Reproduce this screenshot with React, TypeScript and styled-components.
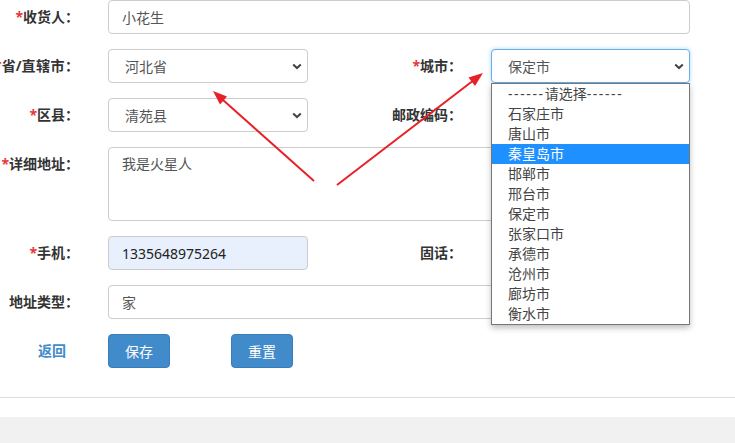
import { createGlobalStyle } from 'styled-components'
import styled from 'styled-components'

const cities = [
  '石家庄市',
  '唐山市',
  '秦皇岛市',
  '邯郸市',
  '邢台市',
  '保定市',
  '张家口市',
  '承德市',
  '沧州市',
  '廊坊市',
  '衡水市',
]

export default function App() {
  return (
    <Page>
      <GlobalStyle />
      <FormArea>
        <FormGrid>
          <Label><Star>*</Star>收货人：</Label>
          <Field $span={3}>
            <TextInput defaultValue="小花生" />
          </Field>

          <Label><Star>*</Star>省/<Wide>直辖市</Wide>：</Label>
          <Field>
            <SelectBox>
              <Select defaultValue="河北省">
                <option>河北省</option>
              </Select>
              <Chevron />
            </SelectBox>
          </Field>
          <Label><Star>*</Star>城市：</Label>
          <Field>
            <SelectBox>
              <Select defaultValue="保定市" $focused>
                <option>保定市</option>
              </Select>
              <Chevron />
              <OptionList>
                <OptionItem>
                  <Dashes>------</Dashes>请选择<Dashes>------</Dashes>
                </OptionItem>
                {cities.map((city, i) => (
                  <OptionItem key={city} $active={i === 2}>{city}</OptionItem>
                ))}
              </OptionList>
            </SelectBox>
          </Field>

          <Label><Star>*</Star>区县：</Label>
          <Field>
            <SelectBox>
              <Select defaultValue="清苑县">
                <option>清苑县</option>
              </Select>
              <Chevron />
            </SelectBox>
          </Field>
          <Label>邮政编码：</Label>
          <Field>
            <TextInput />
          </Field>

          <Label><Star>*</Star>详细地址：</Label>
          <Field $span={3}>
            <TextArea defaultValue="我是火星人" />
          </Field>

          <Label><Star>*</Star>手机：</Label>
          <Field>
            <TextInput defaultValue="1335648975264" $filled />
          </Field>
          <Label>固话：</Label>
          <Field>
            <TextInput />
          </Field>

          <Label>地址类型：</Label>
          <Field $span={3}>
            <TextInput defaultValue="家" />
          </Field>

          <BackLink>返回</BackLink>
          <Actions>
            <Button>保存</Button>
            <Button>重置</Button>
          </Actions>
        </FormGrid>
      </FormArea>
      <Footer />
      <Annotations />
    </Page>
  )
}

function Chevron() {
  return (
    <ChevronIcon width="10" height="7" viewBox="0 0 10 7">
      <path d="M1.2 1.4 L5 5 L8.8 1.4" fill="none" stroke="#444" strokeWidth="2" />
    </ChevronIcon>
  )
}

function Annotations() {
  return (
    <ArrowLayer width="735" height="443" viewBox="0 0 735 443">
      <line x1="314" y1="181" x2="223" y2="100" stroke="#e8202a" strokeWidth="2" />
      <polygon points="213,91 227,96.6 220,104.5" fill="#e8202a" />
      <line x1="337" y1="185" x2="472" y2="81.5" stroke="#e8202a" strokeWidth="2" />
      <polygon points="483,73 475,86 468.5,77.5" fill="#e8202a" />
    </ArrowLayer>
  )
}

const GlobalStyle = createGlobalStyle`
  body {
    margin: 0;
    background: #fff;
    font-family: "Noto Sans", "Noto Sans CJK SC", sans-serif;
    font-size: 14px;
    color: #333;
  }
`

const Page = styled.div`
  position: relative;
  width: 735px;
  height: 443px;
  overflow: hidden;
  background: #fff;
`

const FormArea = styled.div`
  padding-bottom: 29px;
  border-bottom: 1px solid #dedede;
`

const FormGrid = styled.div`
  display: grid;
  grid-template-columns: 108px 200px 183px 199px;
  row-gap: 15px;
  align-items: start;
`

const Label = styled.div`
  display: flex;
  justify-content: flex-end;
  padding-right: 29px;
  line-height: 34px;
  height: 34px;
  font-weight: bold;
  white-space: nowrap;
  color: #333;
`

const Wide = styled.span`
  letter-spacing: 0.5px;
`

const Star = styled.span`
  color: #e4393c;
`

const Field = styled.div<{ $span?: number }>`
  grid-column: span ${p => p.$span ?? 1};
  min-width: 0;
`

const TextInput = styled.input<{ $filled?: boolean }>`
  box-sizing: border-box;
  display: block;
  width: 100%;
  height: 34px;
  padding: 6px 13px;
  border: 1px solid #ccc;
  border-radius: 4px;
  font: inherit;
  font-size: 14px;
  color: ${p => (p.$filled ? '#222' : '#555')};
  background: ${p => (p.$filled ? '#e8f0fe' : '#fff')};
  outline: none;
`

const TextArea = styled.textarea`
  box-sizing: border-box;
  display: block;
  width: 100%;
  height: 74px;
  padding: 5px 13px;
  border: 1px solid #ccc;
  border-radius: 4px;
  font: inherit;
  font-size: 14px;
  color: #555;
  resize: none;
  outline: none;
`

const SelectBox = styled.div`
  position: relative;
`

const Select = styled.select<{ $focused?: boolean }>`
  box-sizing: border-box;
  display: block;
  width: 100%;
  height: 34px;
  padding: 0 16px;
  appearance: none;
  border: 1px solid ${p => (p.$focused ? '#66afe9' : '#ccc')};
  border-radius: 4px;
  box-shadow: ${p => (p.$focused ? '0 0 4px rgba(102, 175, 233, 0.5)' : 'none')};
  font: inherit;
  font-size: 14px;
  color: #555;
  background: #fff;
  outline: none;
`

const ChevronIcon = styled.svg`
  position: absolute;
  right: 6px;
  top: 14px;
  pointer-events: none;
`

const OptionList = styled.ul`
  position: absolute;
  left: 0;
  top: 34px;
  box-sizing: border-box;
  width: 100%;
  margin: 0;
  padding: 0;
  list-style: none;
  background: #fff;
  border: 1px solid #767676;
  box-shadow: 0 3px 6px rgba(0, 0, 0, 0.25);
  z-index: 2;
`

const OptionItem = styled.li<{ $active?: boolean }>`
  height: 20px;
  line-height: 20px;
  padding-left: 16px;
  font-size: 14px;
  white-space: nowrap;
  color: ${p => (p.$active ? '#fff' : '#444')};
  background: ${p => (p.$active ? '#1e90ff' : 'transparent')};
`

const Dashes = styled.span`
  letter-spacing: 1.6px;
`

const BackLink = styled.a`
  display: flex;
  justify-content: flex-end;
  padding-right: 42px;
  line-height: 34px;
  font-weight: bold;
  color: #428bca;
  cursor: pointer;
`

const Actions = styled.div`
  grid-column: span 3;
  display: flex;
  gap: 61px;
`

const Button = styled.button`
  box-sizing: border-box;
  width: 62px;
  height: 34px;
  border: 1px solid #357ebd;
  border-radius: 4px;
  background: #428bca;
  color: #fff;
  font: inherit;
  font-size: 14px;
  cursor: pointer;
`

const Footer = styled.div`
  margin-top: 19px;
  height: 30px;
  background: #f1f1f1;
`

const ArrowLayer = styled.svg`
  position: absolute;
  left: 0;
  top: 0;
  pointer-events: none;
  z-index: 3;
`
